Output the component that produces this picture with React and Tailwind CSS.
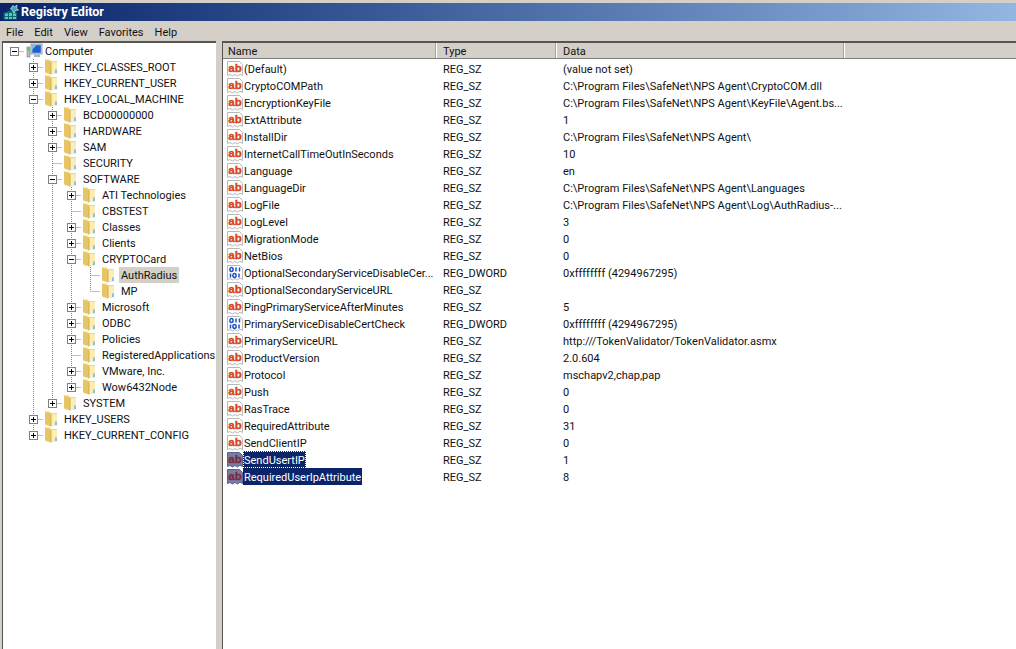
import React from 'react';

const tree = {
  name: 'Computer',
  icon: 'computer',
  open: true,
  children: [
    { name: 'HKEY_CLASSES_ROOT', closed: true },
    { name: 'HKEY_CURRENT_USER', closed: true },
    {
      name: 'HKEY_LOCAL_MACHINE',
      open: true,
      children: [
        { name: 'BCD00000000', closed: true },
        { name: 'HARDWARE', closed: true },
        { name: 'SAM', closed: true },
        { name: 'SECURITY' },
        {
          name: 'SOFTWARE',
          open: true,
          children: [
            { name: 'ATI Technologies', closed: true },
            { name: 'CBSTEST' },
            { name: 'Classes', closed: true },
            { name: 'Clients', closed: true },
            {
              name: 'CRYPTOCard',
              open: true,
              children: [{ name: 'AuthRadius', selected: true }, { name: 'MP' }],
            },
            { name: 'Microsoft', closed: true },
            { name: 'ODBC', closed: true },
            { name: 'Policies', closed: true },
            { name: 'RegisteredApplications' },
            { name: 'VMware, Inc.', closed: true },
            { name: 'Wow6432Node', closed: true },
          ],
        },
        { name: 'SYSTEM', closed: true },
      ],
    },
    { name: 'HKEY_USERS', closed: true },
    { name: 'HKEY_CURRENT_CONFIG', closed: true },
  ],
};

const values = [
  ['(Default)', 'REG_SZ', '(value not set)'],
  ['CryptoCOMPath', 'REG_SZ', 'C:\\Program Files\\SafeNet\\NPS Agent\\CryptoCOM.dll'],
  ['EncryptionKeyFile', 'REG_SZ', 'C:\\Program Files\\SafeNet\\NPS Agent\\KeyFile\\Agent.bs...'],
  ['ExtAttribute', 'REG_SZ', '1'],
  ['InstallDir', 'REG_SZ', 'C:\\Program Files\\SafeNet\\NPS Agent\\'],
  ['InternetCallTimeOutInSeconds', 'REG_SZ', '10'],
  ['Language', 'REG_SZ', 'en'],
  ['LanguageDir', 'REG_SZ', 'C:\\Program Files\\SafeNet\\NPS Agent\\Languages'],
  ['LogFile', 'REG_SZ', 'C:\\Program Files\\SafeNet\\NPS Agent\\Log\\AuthRadius-...'],
  ['LogLevel', 'REG_SZ', '3'],
  ['MigrationMode', 'REG_SZ', '0'],
  ['NetBios', 'REG_SZ', '0'],
  ['OptionalSecondaryServiceDisableCer...', 'REG_DWORD', '0xffffffff (4294967295)'],
  ['OptionalSecondaryServiceURL', 'REG_SZ', ''],
  ['PingPrimaryServiceAfterMinutes', 'REG_SZ', '5'],
  ['PrimaryServiceDisableCertCheck', 'REG_DWORD', '0xffffffff (4294967295)'],
  ['PrimaryServiceURL', 'REG_SZ', 'http:///TokenValidator/TokenValidator.asmx'],
  ['ProductVersion', 'REG_SZ', '2.0.604'],
  ['Protocol', 'REG_SZ', 'mschapv2,chap,pap'],
  ['Push', 'REG_SZ', '0'],
  ['RasTrace', 'REG_SZ', '0'],
  ['RequiredAttribute', 'REG_SZ', '31'],
  ['SendClientIP', 'REG_SZ', '0'],
  ['SendUsertIP', 'REG_SZ', '1', 'focus'],
  ['RequiredUserIpAttribute', 'REG_SZ', '8', 'selected'],
];

// flatten the tree into rows, keeping which guide lines carry on past each row
function flatten(node, level, guides, isLast, out) {
  out.push({ ...node, level, guides, isLast });
  const kids = node.children || [];
  kids.forEach((kid, i) => {
    const next = [...guides, level === 0 ? false : !isLast];
    flatten(kid, level + 1, next, i === kids.length - 1, out);
  });
  return out;
}

const rows = flatten(tree, 0, [], true, []);

function Guide({ on }) {
  return (
    <svg width="19" height="16" className="shrink-0">
      {on && <line x1="9.5" y1="0" x2="9.5" y2="16" stroke="#808080" strokeDasharray="1 1" />}
    </svg>
  );
}

function Connector({ row }) {
  const hasBox = row.open || row.closed;
  return (
    <svg width="19" height="16" className="shrink-0">
      {row.level > 0 && (
        <line x1="9.5" y1="0" x2="9.5" y2={row.isLast ? 8 : 16} stroke="#808080" strokeDasharray="1 1" />
      )}
      <line x1="9.5" y1="8.5" x2="19" y2="8.5" stroke="#808080" strokeDasharray="1 1" />
      {hasBox && (
        <g>
          <rect x="5.5" y="4.5" width="8" height="8" fill="#fff" stroke="#808080" />
          <line x1="7" y1="8.5" x2="12" y2="8.5" stroke="#000" />
          {row.closed && <line x1="9.5" y1="6" x2="9.5" y2="11" stroke="#000" />}
        </g>
      )}
    </svg>
  );
}

function FolderIcon() {
  return (
    <svg width="19" height="16" viewBox="0 0 19 16" className="shrink-0">
      <path d="M2 0.5h4.5L8 2h6v12.5H3.5L2 13z" fill="#f3d67c" />
      <path d="M2 0.5L8 3v12.5L2 13z" fill="#e7c566" />
      <path d="M8 3h6v11.5H8z" fill="#fcedb2" />
      <path d="M8 3v12.5" stroke="#c9a545" strokeWidth="0.8" />
      <path d="M12 10.5h2v3.5h-2z" fill="#8dbddf" />
    </svg>
  );
}

function ComputerIcon() {
  return (
    <svg width="19" height="16" viewBox="0 0 19 16" className="shrink-0">
      <rect x="3" y="4" width="3" height="10" fill="#b9c2bf" stroke="#6f7a78" strokeWidth="0.6" />
      <rect x="3.8" y="5" width="1.4" height="2.5" fill="#45c24a" />
      <rect x="7" y="1" width="11" height="10" fill="#d5dde6" stroke="#7d8b9c" strokeWidth="0.8" />
      <rect x="8.3" y="2.2" width="8.5" height="7.6" fill="#1d5fd2" />
      <path d="M8.3 2.2h4l-4 4.5z" fill="#8cc3f4" />
      <rect x="10" y="11.5" width="6" height="2.5" fill="#aab4c0" />
    </svg>
  );
}

function AppIcon() {
  return (
    <svg width="16" height="16" viewBox="0 0 16 16" className="shrink-0">
      <path d="M0.5 9L7 6.5l7 2v7h-13.5z" fill="#12666e" />
      <path d="M2 9.5h3v2.5H2zM6 9h3v3H6zM10 9.5h3V12h-3zM2 13h3v2H2zM6 13h3v2H6zM10 13h3v2h-3z" fill="#4fc9c9" />
      <path d="M7.5 5L10 1.5l1.5 1.5 2.5-2-.5 3.5L15.5 6l-3 .5L11 9 9.5 6.5z" fill="#2fb0b4" stroke="#d8f4f4" strokeWidth="0.7" />
    </svg>
  );
}

function PageIcon({ kind, selected }) {
  const fill = selected ? '#777ca4' : '#fff';
  const edge = selected ? '#5d6288' : '#b8b8b8';
  const ink = selected ? '#7d2a3a' : '#d8431c';
  return (
    <svg width="16" height="16" viewBox="0 0 16 16" className="shrink-0">
      <path
        d="M0.5 0.5H12.5L15.5 3.5V14.5L13 13.2L10.5 15L8 13.5L5.5 15L3 13.5L0.5 14.5Z"
        fill={fill}
        stroke={edge}
      />
      {kind === 'REG_DWORD' ? (
        <g fill="none" stroke="#1c52c8" strokeWidth="1.5">
          <ellipse cx="4.5" cy="4.5" rx="1.6" ry="1.9" />
          <path d="M9 2.5v4M12.5 2.5v4M3.5 8.5v4M12 8.5v4" />
          <ellipse cx="7.5" cy="10.5" rx="1.6" ry="1.9" />
        </g>
      ) : (
        <text
          x="8"
          y="10.5"
          textAnchor="middle"
          fontFamily="'Liberation Sans', sans-serif"
          fontWeight="700"
          fontSize="11.5"
          fill={ink}
          stroke={ink}
          strokeWidth="0.35"
        >
          ab
        </text>
      )}
    </svg>
  );
}

function HeaderCell({ label, className }) {
  return (
    <div className={`flex h-full items-center justify-between ${className}`}>
      <span className="pt-px">{label}</span>
      <span className="flex h-full">
        <span className="h-full w-px bg-[#a8a49c]" />
        <span className="h-full w-px bg-white" />
      </span>
    </div>
  );
}

export default function App() {
  return (
    <div className="flex h-[649px] w-full flex-col overflow-hidden bg-[#d4d0c8] pt-[3px] font-['Roboto',sans-serif] text-[11px] leading-none text-[#111]">
      <div className="flex h-[18px] shrink-0 items-center gap-[2px] bg-gradient-to-r from-[#0a246a] to-[#94b6e2] pl-[3px]">
        <AppIcon />
        <span className="text-[12.5px] font-bold text-white">Registry Editor</span>
      </div>

      <div className="flex h-5 shrink-0 items-center gap-[11px] pt-[2px] pl-[6px]">
        <span>File</span>
        <span>Edit</span>
        <span>View</span>
        <span>Favorites</span>
        <span>Help</span>
      </div>

      <div className="flex min-h-0 flex-1 pl-[2px]">
        <div className="w-[214px] shrink-0 border-t-2 border-l border-t-[#555] border-l-[#555] bg-white">
          <div className="pl-[2px]">
            {rows.map((row) => (
              <div key={row.name} className="flex h-4 items-center whitespace-nowrap">
                {row.guides.map((on, i) => (
                  <Guide key={i} on={on} />
                ))}
                <Connector row={row} />
                {row.icon === 'computer' ? <ComputerIcon /> : <FolderIcon />}
                <span className={`flex h-4 items-center px-[2px] ${row.selected ? 'bg-[#d4d0c8]' : ''}`}>
                  {row.name}
                </span>
              </div>
            ))}
          </div>
        </div>

        <div className="ml-[6px] min-w-0 flex-1 border-t-2 border-l border-t-[#555] border-l-[#555] bg-white">
          <div className="flex h-4 items-center border-b border-[#808080] bg-[#d4d0c8]">
            <HeaderCell label="Name" className="w-[214px] pl-[5px]" />
            <HeaderCell label="Type" className="w-[120px] pl-[6px]" />
            <HeaderCell label="Data" className="w-[288px] pl-[6px]" />
          </div>
          <div className="pt-px">
            {values.map(([name, type, data, state]) => (
              <div key={name} className="grid h-[17px] grid-cols-[214px_120px_288px] items-center">
                <div className="flex h-full items-center pl-[4px] whitespace-nowrap">
                  <PageIcon kind={type} selected={Boolean(state)} />
                  <span
                    className={`flex h-full items-center px-px pt-px ${
                      state ? 'bg-[#0a246a] text-white' : ''
                    } ${state === 'focus' ? 'outline-1 -outline-offset-1 outline-dotted outline-white' : ''}`}
                  >
                    {name}
                  </span>
                </div>
                <div className="pt-px pl-[6px]">{type}</div>
                <div className="pt-px pl-[6px] whitespace-nowrap">{data}</div>
              </div>
            ))}
          </div>
        </div>
      </div>
    </div>
  );
}
